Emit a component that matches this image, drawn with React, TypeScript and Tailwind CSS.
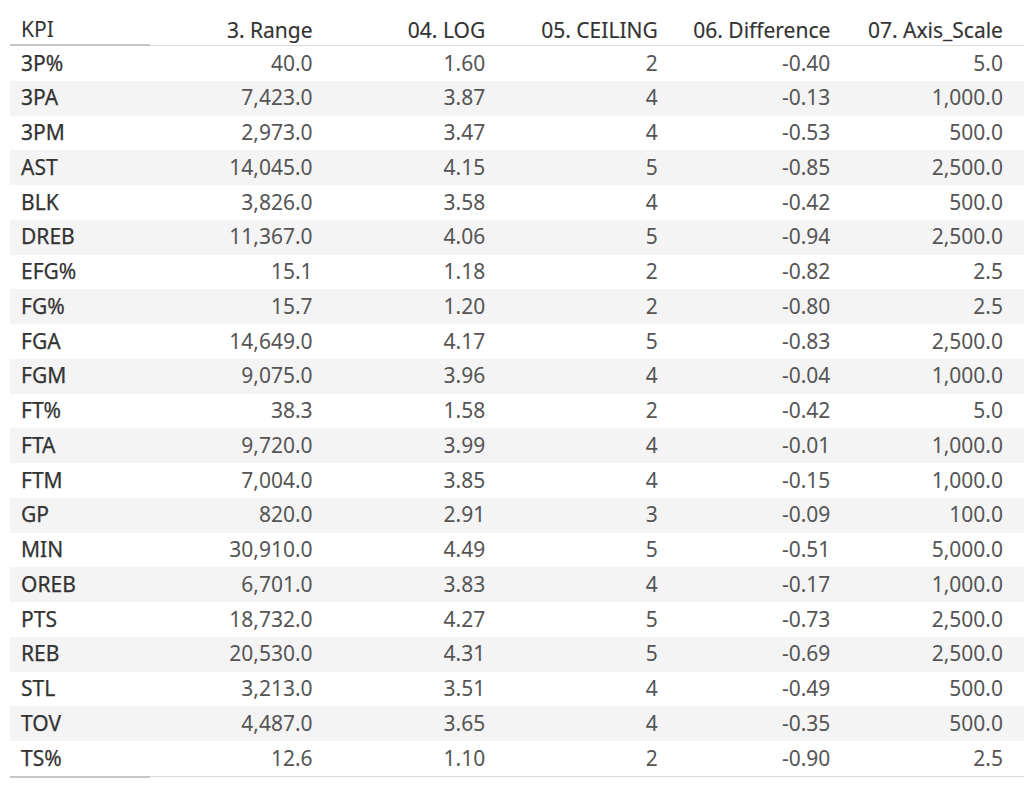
import React from 'react'

type Row = [string, string, string, string, string, string]

const rows: Row[] = [
  ['3P%', '40.0', '1.60', '2', '-0.40', '5.0'],
  ['3PA', '7,423.0', '3.87', '4', '-0.13', '1,000.0'],
  ['3PM', '2,973.0', '3.47', '4', '-0.53', '500.0'],
  ['AST', '14,045.0', '4.15', '5', '-0.85', '2,500.0'],
  ['BLK', '3,826.0', '3.58', '4', '-0.42', '500.0'],
  ['DREB', '11,367.0', '4.06', '5', '-0.94', '2,500.0'],
  ['EFG%', '15.1', '1.18', '2', '-0.82', '2.5'],
  ['FG%', '15.7', '1.20', '2', '-0.80', '2.5'],
  ['FGA', '14,649.0', '4.17', '5', '-0.83', '2,500.0'],
  ['FGM', '9,075.0', '3.96', '4', '-0.04', '1,000.0'],
  ['FT%', '38.3', '1.58', '2', '-0.42', '5.0'],
  ['FTA', '9,720.0', '3.99', '4', '-0.01', '1,000.0'],
  ['FTM', '7,004.0', '3.85', '4', '-0.15', '1,000.0'],
  ['GP', '820.0', '2.91', '3', '-0.09', '100.0'],
  ['MIN', '30,910.0', '4.49', '5', '-0.51', '5,000.0'],
  ['OREB', '6,701.0', '3.83', '4', '-0.17', '1,000.0'],
  ['PTS', '18,732.0', '4.27', '5', '-0.73', '2,500.0'],
  ['REB', '20,530.0', '4.31', '5', '-0.69', '2,500.0'],
  ['STL', '3,213.0', '3.51', '4', '-0.49', '500.0'],
  ['TOV', '4,487.0', '3.65', '4', '-0.35', '500.0'],
  ['TS%', '12.6', '1.10', '2', '-0.90', '2.5'],
]

const headers = ['3. Range', '04. LOG', '05. CEILING', '06. Difference', '07. Axis_Scale']

const cols = 'grid grid-cols-[140px_172.6px_172.6px_172.6px_172.6px_172.6px_1fr]'

export default function App() {
  return (
    <div className="w-[1024px] h-[792px] bg-white pl-[10px] font-['Noto_Sans',sans-serif] overflow-hidden">
      {/* Header */}
      <div className={`${cols} h-[46px] text-[21px] leading-[26px] text-[#333]`}>
        <div className="h-full flex items-end pb-[2px] pl-[11px] border-b-2 border-[#c6c6c6]">KPI</div>
        {headers.map((h) => (
          <div key={h} className="h-full flex items-end justify-end pb-[2px] pr-[10px] border-b border-[#dadada] [-webkit-text-stroke:0.15px_#333]">
            {h}
          </div>
        ))}
        <div className="h-full border-b border-[#dadada]" />
      </div>

      {/* Rows */}
      {rows.map((r, i) => (
        <div
          key={r[0]}
          className={`${cols} h-[34.75px] items-center text-[21px] ${i % 2 === 1 ? 'bg-[#f4f4f4]' : 'bg-white'}`}
        >
          <div className="pl-[11px] text-[#333] [-webkit-text-stroke:0.25px_#333]">{r[0]}</div>
          {r.slice(1).map((v, j) => (
            <div key={j} className="text-right pr-[10px] text-[#555]">
              {v}
            </div>
          ))}
          <div />
        </div>
      ))}

      {/* Bottom rule */}
      <div className={cols}>
        <div className="border-t-2 border-[#c6c6c6]" />
        <div className="col-span-6 border-t border-[#dadada]" />
      </div>
    </div>
  )
}
